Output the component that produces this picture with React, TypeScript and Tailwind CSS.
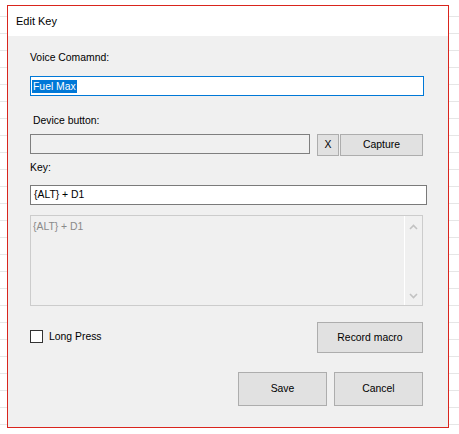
import React from "react";

function WinButton({label, className}: {label: string; className: string}) {
    return <div
        className={"flex items-center justify-center bg-[#e1e1e1] border border-[#adadad] text-black " + className}>
        {label}
    </div>
}

function Chevron({up}: {up?: boolean}) {
    return <svg width="9" height="6" viewBox="0 0 9 6" fill="none">
        <polyline points={up ? "1,5 4.5,1.5 8,5" : "1,1 4.5,4.5 8,1"} stroke="#c2c2c2" strokeWidth="1.6"/>
    </svg>
}

export default function App() {
    return <div
        className="w-[459px] h-[434px] pt-[5px] pl-[7px] bg-white bg-[linear-gradient(to_bottom,transparent_16px,#e6e6e6_16px)] bg-[length:100%_17px] font-['Liberation_Sans',Arial,sans-serif] text-[10.4px] text-black">
        <div className="w-[442px] h-[423px] border border-[#d9251d] flex flex-col bg-[#f0f0f0]">
            <div className="h-[30px] bg-white flex items-center pl-[8px] text-[11px]">Edit Key</div>

            <div className="flex flex-col pl-[22px]">
                <div className="mt-[15px] leading-[13px]">Voice Comamnd:</div>
                <div
                    className="mt-[12px] w-[394px] h-[20px] bg-white border border-[#0078d7] flex items-center pl-[1px]">
                    <span className="bg-[#0078d7] text-white leading-[13px] px-[1px]">Fuel Max</span>
                </div>

                <div className="mt-[18px] leading-[13px] pl-[3px]">Device button:</div>
                <div className="mt-[7px] flex items-start">
                    <div className="w-[280px] h-[20px] border border-[#7f7f7f] bg-[#f0f0f0]"></div>
                    <WinButton label="X" className="ml-[7px] w-[22px] h-[22px]"/>
                    <WinButton label="Capture" className="ml-[1px] w-[83px] h-[22px]"/>
                </div>

                <div className="mt-[5px] leading-[13px]">Key:</div>
                <div
                    className="mt-[11px] w-[397px] h-[20px] bg-white border border-[#7a7a7a] flex items-center pl-[3px]">
                    {"{ALT} + D1"}
                </div>

                <div className="mt-[10px] w-[393px] h-[91px] border border-[#cccccc] bg-[#f0f0f0] flex">
                    <div className="flex-1 pl-[2px] pt-[4px] leading-[13px] text-[#8a8a8a]">{"{ALT} + D1"}</div>
                    <div
                        className="w-[18px] border-l border-white flex flex-col items-center justify-between pt-[8px] pb-[6px]">
                        <Chevron up/>
                        <Chevron/>
                    </div>
                </div>

                <div className="mt-[16px] w-[393px] flex items-center justify-between">
                    <div className="flex items-center gap-[6px] -mt-[2px]">
                        <div className="w-[13px] h-[13px] border border-[#333333] bg-white"></div>
                        <span>Long Press</span>
                    </div>
                    <WinButton label="Record macro" className="w-[106px] h-[31px]"/>
                </div>

                <div className="mt-[19px] w-[393px] flex justify-end gap-[7px]">
                    <WinButton label="Save" className="w-[89px] h-[34px]"/>
                    <WinButton label="Cancel" className="w-[89px] h-[34px]"/>
                </div>
            </div>
        </div>
    </div>
}
